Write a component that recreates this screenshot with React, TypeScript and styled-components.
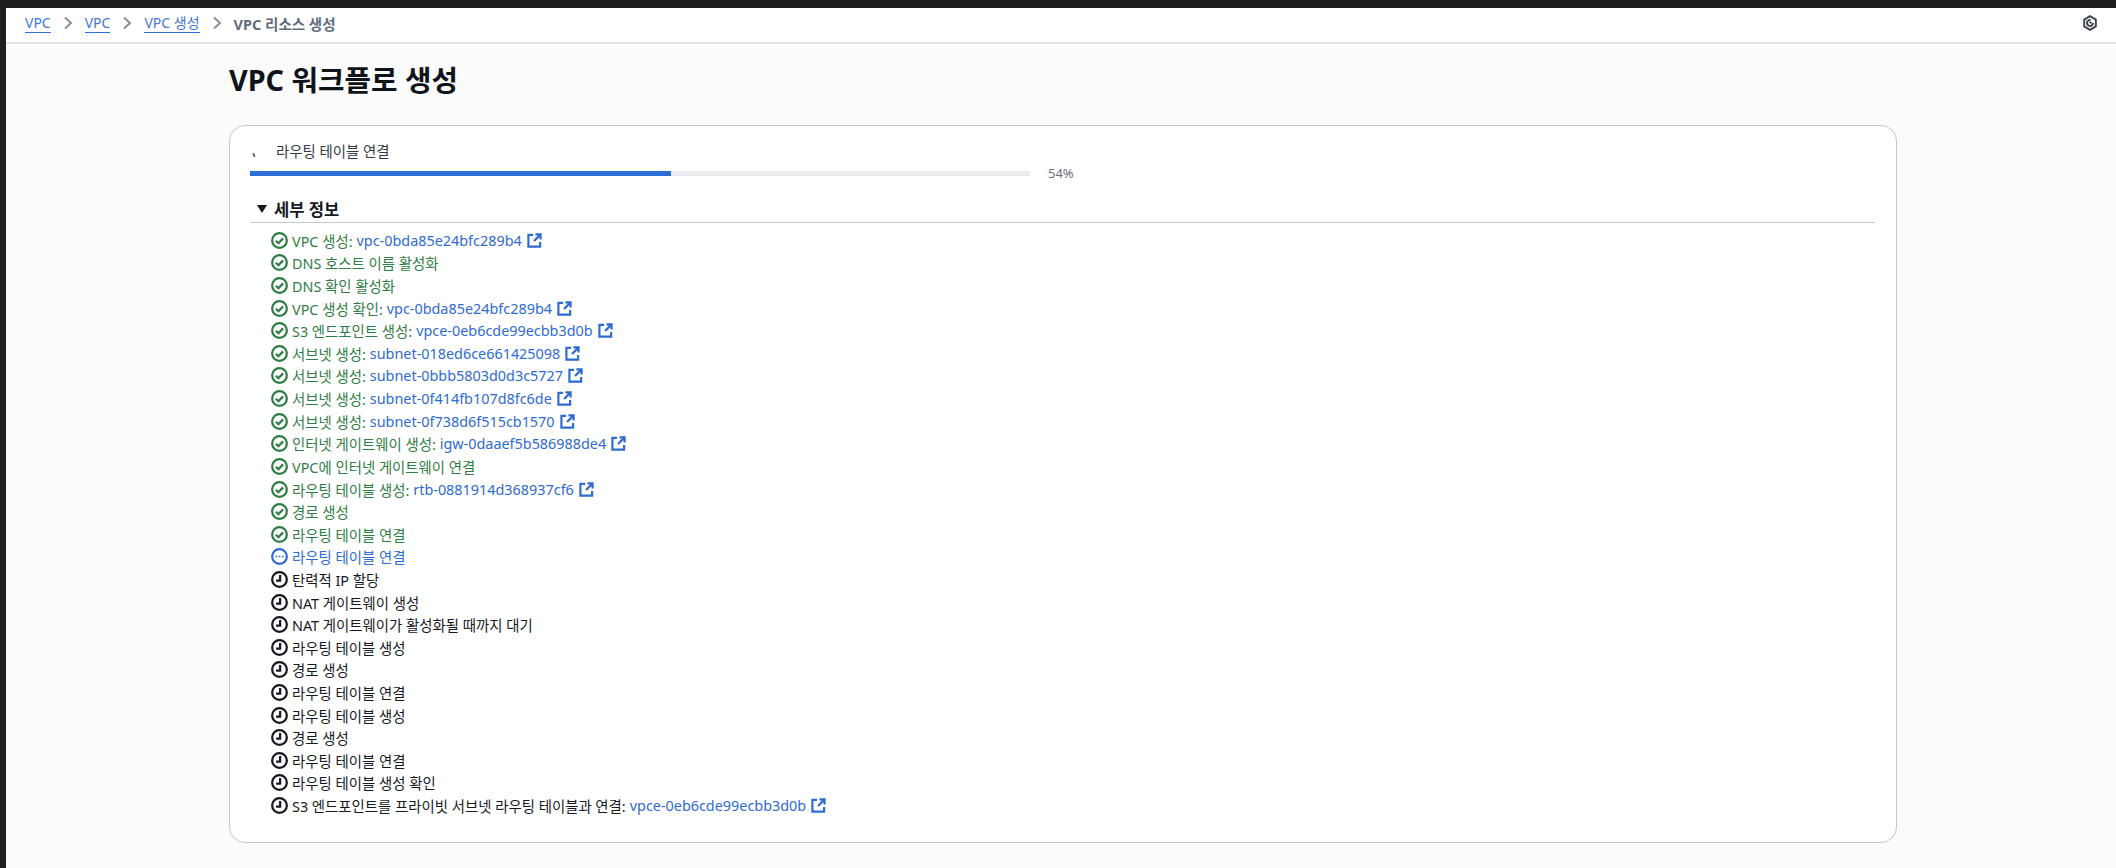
import React from "react";
import styled, { createGlobalStyle } from "styled-components";

const Global = createGlobalStyle`
  html, body { margin: 0; padding: 0; height: 100%; background: #1f1f1f; }
  #root { height: 100%; }
  * { box-sizing: border-box; }
`;

const Frame = styled.div`
  width: 2116px;
  height: 868px;
  padding: 8px 0 0 6px;
  background: #1f1f1f;
  overflow: hidden;
  font-family: "Noto Sans", "Noto Sans CJK KR", sans-serif;
  color: #16191f;
`;
const Surface = styled.div`
  height: 860px;
  background: #fbfbfb;
  display: flex;
  flex-direction: column;
`;
const TopBar = styled.header`
  height: 36px;
  flex: none;
  background: #fff;
  border-bottom: 2px solid #e2e2e8;
  display: flex;
  align-items: center;
  padding: 0 18px 4px 19px;
`;
const Crumbs = styled.nav`
  display: flex;
  align-items: center;
  gap: 12px;
  flex: 1;
  font-size: 14px;
`;
const CrumbLink = styled.a`
  color: #3f78d8;
  border-bottom: 1px solid #2f6fe0;
  line-height: 18px;
`;
const CrumbCurrent = styled.span`
  color: #5f6b7a;
  font-weight: 700;
  font-size: 14.5px;
`;
const Content = styled.main`
  padding: 0 0 0 223px;
`;
const Title = styled.h1`
  margin: 16px 0 25px;
  font-size: 28.8px;
  line-height: 40px;
  font-weight: 700;
  color: #0f141a;
`;
const Card = styled.section`
  width: 1668px;
  height: 718px;
  background: #fff;
  border: 1px solid #c6c6cd;
  border-radius: 16px;
  padding: 14px 21px 0 20px;
`;
const StatusLabel = styled.div`
  height: 24px;
  padding-left: 26px;
  font-size: 14.4px;
  line-height: 24px;
  color: #333a44;
  position: relative;
`;
const Tick = styled.span`
  position: absolute;
  left: 3px;
  top: 13px;
  width: 1.5px;
  height: 4px;
  background: #6f6f78;
  transform: rotate(-20deg);
`;
const ProgressRow = styled.div`
  display: flex;
  align-items: center;
  gap: 18px;
`;
const Track = styled.div`
  width: 780px;
  height: 5px;
  background: #ebebf0;
`;
const Fill = styled.div`
  height: 100%;
  background: #2e6ed8;
`;
const Percent = styled.span`
  font-size: 13px;
  color: #687078;
`;
const Details = styled.div`
  margin-top: 13px;
`;
const DetailsHead = styled.div`
  height: 28px;
  display: flex;
  align-items: center;
  gap: 7px;
  padding-left: 7px;
  font-size: 16.6px;
  font-weight: 700;
  color: #16191f;
  border-bottom: 1px solid #c6c6cd;
`;
const Caret = styled.span`
  width: 0;
  height: 0;
  border-left: 5.5px solid transparent;
  border-right: 5.5px solid transparent;
  border-top: 8px solid #16191f;
`;
const Steps = styled.ul`
  list-style: none;
  margin: 6px 0 0;
  padding: 0 0 0 21px;
`;
const Step = styled.li<{ $tone: string }>`
  height: 22.62px;
  display: flex;
  align-items: center;
  font-size: 14.4px;
  white-space: nowrap;
  color: ${(p) => p.$tone};
`;
const StepIcon = styled.svg`
  width: 17px;
  height: 17px;
  flex: none;
  margin-right: 4px;
`;
const ResourceLink = styled.a`
  display: inline-flex;
  align-items: center;
  color: #2f6bd0;
  margin-left: 4px;
`;
const ExternalIcon = styled.svg`
  width: 15px;
  height: 15px;
  margin-left: 5px;
`;
const Settings = styled.svg`
  width: 16px;
  height: 16px;
`;

type Kind = "done" | "running" | "pending";
const tones: Record<Kind, string> = { done: "#2f7d45", running: "#2f6bd0", pending: "#16191f" };

const Icon = ({ kind }: { kind: Kind }) => (
  <StepIcon viewBox="0 0 16 16" fill="none" stroke={tones[kind]} strokeWidth="2.1">
    <circle cx="8" cy="8" r="6.9" />
    {kind === "done" && <path d="M4.6 8.2l2.4 2.4 4.4-4.6" />}
    {kind === "pending" && <path d="M8.6 3.8V9H4.8" />}
    {kind === "running" && <path d="M4.2 8h1.6M7.2 8h1.6M10.2 8h1.6" strokeWidth="1.6" />}
  </StepIcon>
);

const External = () => (
  <ExternalIcon viewBox="0 0 16 16" fill="none" stroke="#2f6bd0" strokeWidth="2.3">
    <path d="M6.5 2H1.5v12.5H14V9.5" />
    <path d="M9 1.5H14.5V7M14 2L7.5 8.5" />
  </ExternalIcon>
);

const steps: { kind: Kind; label: string; id?: string }[] = [
  { kind: "done", label: "VPC 생성:", id: "vpc-0bda85e24bfc289b4" },
  { kind: "done", label: "DNS 호스트 이름 활성화" },
  { kind: "done", label: "DNS 확인 활성화" },
  { kind: "done", label: "VPC 생성 확인:", id: "vpc-0bda85e24bfc289b4" },
  { kind: "done", label: "S3 엔드포인트 생성:", id: "vpce-0eb6cde99ecbb3d0b" },
  { kind: "done", label: "서브넷 생성:", id: "subnet-018ed6ce661425098" },
  { kind: "done", label: "서브넷 생성:", id: "subnet-0bbb5803d0d3c5727" },
  { kind: "done", label: "서브넷 생성:", id: "subnet-0f414fb107d8fc6de" },
  { kind: "done", label: "서브넷 생성:", id: "subnet-0f738d6f515cb1570" },
  { kind: "done", label: "인터넷 게이트웨이 생성:", id: "igw-0daaef5b586988de4" },
  { kind: "done", label: "VPC에 인터넷 게이트웨이 연결" },
  { kind: "done", label: "라우팅 테이블 생성:", id: "rtb-0881914d368937cf6" },
  { kind: "done", label: "경로 생성" },
  { kind: "done", label: "라우팅 테이블 연결" },
  { kind: "running", label: "라우팅 테이블 연결" },
  { kind: "pending", label: "탄력적 IP 할당" },
  { kind: "pending", label: "NAT 게이트웨이 생성" },
  { kind: "pending", label: "NAT 게이트웨이가 활성화될 때까지 대기" },
  { kind: "pending", label: "라우팅 테이블 생성" },
  { kind: "pending", label: "경로 생성" },
  { kind: "pending", label: "라우팅 테이블 연결" },
  { kind: "pending", label: "라우팅 테이블 생성" },
  { kind: "pending", label: "경로 생성" },
  { kind: "pending", label: "라우팅 테이블 연결" },
  { kind: "pending", label: "라우팅 테이블 생성 확인" },
  { kind: "pending", label: "S3 엔드포인트를 프라이빗 서브넷 라우팅 테이블과 연결:", id: "vpce-0eb6cde99ecbb3d0b" },
];

const Chevron = () => (
  <svg width="10" height="14" viewBox="0 0 10 14" fill="none" stroke="#8d8d96" strokeWidth="2">
    <path d="M2 1.5L8 7l-6 5.5" />
  </svg>
);

export default function App() {
  return (
    <Frame>
      <Global />
      <Surface>
        <TopBar>
          <Crumbs>
            <CrumbLink>VPC</CrumbLink>
            <Chevron />
            <CrumbLink>VPC</CrumbLink>
            <Chevron />
            <CrumbLink>VPC 생성</CrumbLink>
            <Chevron />
            <CrumbCurrent>VPC 리소스 생성</CrumbCurrent>
          </Crumbs>
          <Settings viewBox="0 0 16 16" fill="none" stroke="#414750" strokeWidth="2">
            <path d="M8 1.2l5.8 3.4v6.8L8 14.8l-5.8-3.4V4.6z" />
            <path d="M8.6 5.1A3 3 0 1 0 11 8" />
            <circle cx="8.6" cy="7.6" r="1.2" fill="#414750" stroke="none" />
          </Settings>
        </TopBar>
        <Content>
          <Title>VPC 워크플로 생성</Title>
          <Card>
            <StatusLabel>
              <Tick />
              라우팅 테이블 연결
            </StatusLabel>
            <ProgressRow>
              <Track>
                <Fill style={{ width: "54%" }} />
              </Track>
              <Percent>54%</Percent>
            </ProgressRow>
            <Details>
              <DetailsHead>
                <Caret />
                세부 정보
              </DetailsHead>
              <Steps>
                {steps.map((s, i) => (
                  <Step key={i} $tone={tones[s.kind]}>
                    <Icon kind={s.kind} />
                    {s.label}
                    {s.id && (
                      <ResourceLink>
                        {s.id}
                        <External />
                      </ResourceLink>
                    )}
                  </Step>
                ))}
              </Steps>
            </Details>
          </Card>
        </Content>
      </Surface>
    </Frame>
  );
}
